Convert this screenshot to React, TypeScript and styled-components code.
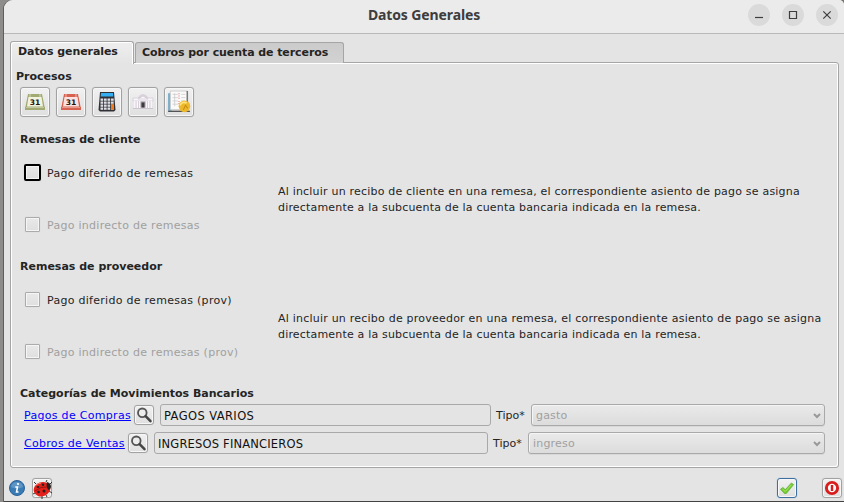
import React from "react";
import styled, { createGlobalStyle } from "styled-components";

const GlobalStyle = createGlobalStyle`
  * { box-sizing: border-box; }
  body { margin: 0; background: #858381; }
  #root { overflow: hidden; height: 502px; }
`;

const Desktop = styled.div`
  width: 844px;
  height: 502px;
  padding-left: 4px;
  background: linear-gradient(90deg, #8f8d8b, #757371);
  overflow: hidden;
`;

const Window = styled.div`
  height: 502px;
  border-bottom: 1px solid #424242;
  box-shadow: -1px 0 #5e5e5e;
  border-radius: 9px 5px 0 0;
  background: #e4e4e4;
  color: #242424;
  font: 11px/16px "DejaVu Sans", sans-serif;
  white-space: nowrap;
  overflow: hidden;
`;

const TitleBar = styled.header`
  display: grid;
  grid-template-columns: 1fr auto 1fr;
  align-items: center;
  height: 34px;
  padding: 0 6px 4px 0;
  background: #ebebeb;
  border-bottom: 1px solid #b9b9b9;
`;

const Title = styled.h1`
  grid-column: 2;
  margin: 0 0 0 6px;
  color: #3d3d3d;
  font: 700 14px/20px "Noto Sans", sans-serif;
  letter-spacing: -0.12px;
`;

const WindowControls = styled.div`
  display: flex;
  justify-content: flex-end;
  gap: 12px;
`;

const ControlButton = styled.button`
  width: 22px;
  height: 22px;
  padding: 0;
  border: 0;
  border-radius: 50%;
  background: #dadada;
  svg { display: block; }
`;

const TabBar = styled.nav`
  display: flex;
  align-items: flex-end;
  height: 29px;
  padding: 6px 0 0 6px;
`;

const Tab = styled.button<{ $active?: boolean; $width: number }>`
  position: relative;
  z-index: ${(p) => (p.$active ? 1 : 0)};
  width: ${(p) => p.$width}px;
  height: ${(p) => (p.$active ? 23 : 21)}px;
  margin: 0 1px ${(p) => (p.$active ? -1 : 0)}px 0;
  padding: ${(p) => (p.$active ? "0 0 2px 7px" : "0 0 1px 6px")};
  border: 1px solid #a5a5a5;
  border-bottom: 0;
  border-radius: 3px 3px 0 0;
  background: ${(p) => (p.$active ? "linear-gradient(#eeeeee, #e4e4e4)" : "linear-gradient(#cbcbcb, #d2d2d2)")};
  box-shadow: ${(p) => (p.$active ? "inset 1px 1px #fff, inset -1px 0 #fff" : "none")};
  color: #242424;
  font: 700 11px/16px "DejaVu Sans", sans-serif;
  letter-spacing: -0.08px;
  text-align: left;
  white-space: nowrap;
`;

const Page = styled.main`
  display: flex;
  flex-direction: column;
  width: 829px;
  height: 406px;
  margin: -1px 0 0 6px;
  padding: 5px 0 0 5px;
  border: 1px solid #a5a5a5;
  border-radius: 0 3px 3px 3px;
  box-shadow: inset 1px 1px #fff, inset -1px -1px #fff;
`;

const Heading = styled.h2<{ $indent?: number }>`
  margin: 0 0 0 ${(p) => p.$indent ?? 4}px;
  padding-top: 2px;
  font: 700 11px/14px "DejaVu Sans", sans-serif;
`;

const Toolbar = styled.div`
  display: flex;
  gap: 6px;
  margin: 3px 0 14px 4px;
`;

const IconButton = styled.button<{ $size: number; $accent?: boolean }>`
  display: grid;
  place-items: center;
  flex: none;
  width: ${(p) => p.$size}px;
  height: ${(p) => p.$size}px;
  padding: 0;
  border: 1px solid ${(p) => (p.$accent ? "#3e6f9f" : "#a2a2a2")};
  border-radius: 3px;
  background: linear-gradient(#f1f1f1, #dfdfdf);
  box-shadow: inset 0 0 0 1px #f7f7f7, 0 0 1px ${(p) => (p.$accent ? "#73a5d9" : "#c2c2c2")};
  svg { display: block; }
`;

const Section = styled.section`
  height: 127px;
`;

const SectionBody = styled.div`
  display: grid;
  grid-template-columns: 254px 1fr;
  margin: 17px 0 0 8px;
`;

const Options = styled.div`
  display: flex;
  flex-direction: column;
  gap: 35px;
`;

const Option = styled.label<{ $disabled?: boolean }>`
  display: flex;
  align-items: center;
  height: 17px;
  gap: 6px;
  color: ${(p) => (p.$disabled ? "#a0a0a0" : "#242424")};
  letter-spacing: 0.28px;
`;

const OptionText = styled.span`
  padding-top: 2px;
`;

const CheckBox = styled.span<{ $focused?: boolean }>`
  width: ${(p) => (p.$focused ? 17 : 15)}px;
  height: ${(p) => (p.$focused ? 17 : 15)}px;
  margin: 0 ${(p) => (p.$focused ? 0 : 1)}px;
  border: ${(p) => (p.$focused ? "2px solid #000" : "1px solid #ababab")};
  border-radius: ${(p) => (p.$focused ? 2 : 1)}px;
  background: linear-gradient(#e9e9e9, #dfdfdf);
  box-shadow: inset 0 0 0 1px #f5f5f5, 0 0 1px #cccccc;
`;

const Description = styled.p`
  margin: 20px 0 0;
`;

const DescriptionLine = styled.span<{ $spacing: number }>`
  display: block;
  letter-spacing: ${(p) => p.$spacing}px;
`;

const CategoryRow = styled.div<{ $columns: string }>`
  display: grid;
  grid-template-columns: ${(p) => p.$columns};
  align-items: center;
  width: 801px;
  height: 22px;
  margin: 3px 0 0 8px;
  & + & { margin-top: 6px; }
`;

const Link = styled.a`
  padding-top: 1px;
  color: #0000ff;
  text-decoration: underline;
  letter-spacing: 0.3px;
`;

const FieldLabel = styled.span`
  padding-top: 1px;
`;

const TextField = styled.div<{ $spacing: number }>`
  height: 22px;
  padding: 3px 3px 0;
  border: 1px solid #a9a9a9;
  border-radius: 3px;
  color: #111;
  font-size: 11.5px;
  letter-spacing: ${(p) => p.$spacing}px;
`;

const SelectBox = styled.div`
  display: flex;
  align-items: center;
  justify-content: space-between;
  height: 22px;
  padding: 1px 3px 0 4px;
  border: 1px solid #a9a9a9;
  border-radius: 3px;
  background: linear-gradient(#eaeaea, #dcdcdc);
  box-shadow: inset 1px 1px #f5f5f5, 0 1px #d8d8d8;
  color: #a0a0a0;
  letter-spacing: 0.2px;
`;

const Footer = styled.footer`
  display: flex;
  align-items: center;
  height: 20px;
  margin: 10px 2px 0 5px;
`;

const Gap = styled.span<{ $width?: number }>`
  flex: ${(p) => (p.$width ? `0 0 ${p.$width}px` : "1")};
`;

const Calendar = ({ color, paper }: { color: string; paper: string }) => (
  <svg width="22" height="22" viewBox="0 0 22 22">
    <path d="M4 3h14l3 15H1z" fill={color} />
    <path d="M4.5 6h13l1.5 9.5H3z" fill={paper} />
    <path d="M1 16h20v3H1z" fill={color} />
    <path d="M2 16.5h18" stroke="#fff" strokeOpacity=".35" />
    <path d="M6 3v3M16 3v3" stroke="#fff" strokeOpacity=".55" />
    <text x="11" y="13.8" textAnchor="middle" fontFamily="DejaVu Sans" fontWeight="700" fontSize="7.6" fill="#171711">31</text>
  </svg>
);

const Calculator = () => (
  <svg width="22" height="22" viewBox="0 0 22 22">
    <path d="M4 1h14l1.5 18-1.5 1.5H4L2.5 19z" fill="#303035" />
    <path d="M5 2h12l.3 3.5H4.7z" fill="#35aef0" />
    {[7.5, 10.5, 13.5, 16.5].map((y) =>
      [4.5, 8, 11.5, 15].map((x) => (
        <rect key={`${x}-${y}`} x={x} y={y} width="2.7" height="2.3" fill="#dddee6" />
      )),
    )}
    <path d="M15 13.3h3v5.5h-3z" fill="#f27a20" />
  </svg>
);

const Bank = () => (
  <svg width="22" height="22" viewBox="0 0 22 22">
    <path d="M7 5q4-4 8 0l1 2H6z" fill="#d9d2dc" />
    <path d="M1 7h20v3H1z" fill="#f8f4fa" stroke="#cbc3ce" strokeWidth=".6" />
    <path d="M2 10h18v7H2z" fill="#d6ced9" />
    <path d="M6 8l5-3 5 3z" fill="#faf7fb" stroke="#c9c0cc" strokeWidth=".6" />
    <path d="M2.8 10v7M5.3 10v7M7.8 10v7M14.2 10v7M16.7 10v7M19.2 10v7" stroke="#fffaff" strokeWidth="1.3" />
    <path d="M8.5 10.5h5v6h-5z" fill="#aaa3ad" />
    <path d="M9.5 11.5h3v5h-3z" fill="#3d393e" />
    <path d="M1 17.5h20" stroke="#cbc3ce" />
  </svg>
);

const Ledger = () => (
  <svg width="24" height="24" viewBox="0 0 22 22">
    <path d="M1 3h3v16H1z" fill="#78abc9" />
    <path d="M3 1h16v17H3z" fill="#fafafa" stroke="#bcbcbc" strokeWidth=".6" />
    <path d="M5 4h5M5 7h5M5 10h5M5 13h5M13 4h4M13 7h4M13 10h3M7 3v12" stroke="#ccc" strokeWidth=".7" />
    <path d="M11 3v5M11 10v4" stroke="#d9797d" strokeDasharray="1 1" />
    <path d="M18.5 1v12" stroke="#555" />
    <path d="M1 19.5h20" stroke="#252525" />
    <circle cx="16" cy="15" r="5.3" fill="#edb92c" />
    <path d="M12 14q2-4 6-2" stroke="#ffe783" strokeWidth="1.5" fill="none" />
    <path d="M15 18l2-4 2 3" stroke="#c88c14" fill="none" />
  </svg>
);

const Magnifier = () => (
  <svg width="18" height="18" viewBox="0 0 18 18" fill="none">
    <circle cx="7.3" cy="6.8" r="4.3" fill="#ededed" stroke="#555" strokeWidth="1.8" />
    <path d="M10.6 10.2l4.9 5" stroke="#444" strokeWidth="2.5" strokeLinecap="round" />
  </svg>
);

const Chevron = () => (
  <svg width="8" height="6" viewBox="0 0 8 6">
    <path d="M1 1l3 3 3-3" stroke="#999" strokeWidth="2" fill="none" />
  </svg>
);

const Info = () => (
  <svg width="16" height="16" viewBox="0 0 16 16">
    <circle cx="8" cy="8" r="7.5" fill="#397bb5" stroke="#2c6398" />
    <path d="M2 7q1-5 6-5t6 5q-6 3-12 0" fill="#7fabd2" opacity=".55" />
    <path d="M6.3 7h2.2l-1 5h2" stroke="#fff" strokeWidth="1.5" fill="none" />
    <circle cx="9" cy="4" r="1.1" fill="#fff" />
  </svg>
);

const Ladybug = () => (
  <svg width="20" height="20" viewBox="0 0 20 20">
    <path d="M3 5L1 3M2 14l-2 1M9 17v3M13 16l1 2M16 12l3 2M13 3l1-2M17 5l2-2" stroke="#333" />
    <ellipse cx="9" cy="10.2" rx="8.5" ry="7" transform="rotate(-20 9 10.2)" fill="#e41e18" />
    <path d="M14 3q4 1 4 5-.5 2.5-2.5 3-3-3.5-1.5-8" fill="#262020" />
    <path d="M2 12q6-5 12-4" stroke="#7d1412" strokeWidth=".8" fill="none" />
    <ellipse cx="5" cy="8" rx="1.4" ry="1" fill="#242020" />
    <circle cx="10" cy="5.7" r="1.2" fill="#242020" />
    <circle cx="5.5" cy="13" r="1.3" fill="#242020" />
    <circle cx="11" cy="12" r="1.5" fill="#242020" />
    <path d="M3 6q3-2 5-2" stroke="#ff8b78" fill="none" />
  </svg>
);

const Check = () => (
  <svg width="16" height="16" viewBox="0 0 16 16">
    <path d="M1.5 9.2l2.6-1.8 2.1 2.4 6.2-6.8 2.2 1.6-7.3 8.9H5.5z" fill="#71cb2e" stroke="#5aa934" strokeWidth=".7" />
    <path d="M3.5 9l2.7 2.5 6.3-6.8" stroke="#a4ea65" fill="none" />
  </svg>
);

const Power = () => (
  <svg width="16" height="16" viewBox="0 0 16 16" fill="none">
    <circle cx="8" cy="8" r="5.6" fill="#fafafa" stroke="#d91d1d" strokeWidth="2.9" />
    <path d="M8 5v6" stroke="#d91d1d" strokeWidth="2.4" />
  </svg>
);

type RemittanceProps = { party: string; suffix?: string; focused?: boolean; spacing: number };

const RemittanceSection = ({ party, suffix = "", focused = false, spacing }: RemittanceProps) => (
  <Section>
    <Heading>Remesas de {party}</Heading>
    <SectionBody>
      <Options>
        <Option><CheckBox $focused={focused} /><OptionText>Pago diferido de remesas{suffix}</OptionText></Option>
        <Option $disabled><CheckBox /><OptionText>Pago indirecto de remesas{suffix}</OptionText></Option>
      </Options>
      <Description>
        <DescriptionLine $spacing={spacing}>
          Al incluir un recibo de {party} en una remesa, el correspondiente asiento de pago se asigna
        </DescriptionLine>
        <DescriptionLine $spacing={0.18}>
          directamente a la subcuenta de la cuenta bancaria indicada en la remesa.
        </DescriptionLine>
      </Description>
    </SectionBody>
  </Section>
);

export default function App() {
  return (
    <Desktop>
      <GlobalStyle />
      <Window>
        <TitleBar>
          <Title>Datos Generales</Title>
          <WindowControls>
            {["M7 13.5h8", "M7.5 7.5h7v7h-7z", "M7.3 7.3l7.4 7.4M14.7 7.3l-7.4 7.4"].map((d) => (
              <ControlButton key={d}>
                <svg width="22" height="22" viewBox="0 0 22 22"><path d={d} fill="none" stroke="#3d3d3d" strokeWidth="1.2" /></svg>
              </ControlButton>
            ))}
          </WindowControls>
        </TitleBar>
        <TabBar>
          <Tab $active $width={124}>Datos <u>g</u>enerales</Tab>
          <Tab $width={209}>Cobros por cuenta de terceros</Tab>
        </TabBar>
        <Page>
          <Heading $indent={0}>Procesos</Heading>
          <Toolbar>
            <IconButton $size={30}><Calendar color="#a1aa70" paper="#f2f3df" /></IconButton>
            <IconButton $size={30}><Calendar color="#d7624f" paper="#fbe1df" /></IconButton>
            <IconButton $size={30}><Calculator /></IconButton>
            <IconButton $size={30}><Bank /></IconButton>
            <IconButton $size={30}><Ledger /></IconButton>
          </Toolbar>
          <RemittanceSection party="cliente" focused spacing={0.2} />
          <RemittanceSection party="proveedor" suffix=" (prov)" spacing={0.22} />
          <Heading>Categorías de Movimientos Bancarios</Heading>
          <CategoryRow $columns="110px 26px 331px 5px 35px 294px">
            <Link>Pagos de Compras</Link>
            <IconButton $size={20}><Magnifier /></IconButton>
            <TextField $spacing={0.4}>PAGOS VARIOS</TextField>
            <span />
            <FieldLabel>Tipo*</FieldLabel>
            <SelectBox>gasto<Chevron /></SelectBox>
          </CategoryRow>
          <CategoryRow $columns="104px 26px 334px 5px 35px 297px">
            <Link>Cobros de Ventas</Link>
            <IconButton $size={20}><Magnifier /></IconButton>
            <TextField $spacing={0.18}>INGRESOS FINANCIEROS</TextField>
            <span />
            <FieldLabel>Tipo*</FieldLabel>
            <SelectBox>ingreso<Chevron /></SelectBox>
          </CategoryRow>
        </Page>
        <Footer>
          <Info />
          <Gap $width={7} />
          <IconButton $size={20}><Ladybug /></IconButton>
          <Gap />
          <IconButton $size={20} $accent><Check /></IconButton>
          <Gap $width={25} />
          <IconButton $size={20}><Power /></IconButton>
        </Footer>
      </Window>
    </Desktop>
  );
}
